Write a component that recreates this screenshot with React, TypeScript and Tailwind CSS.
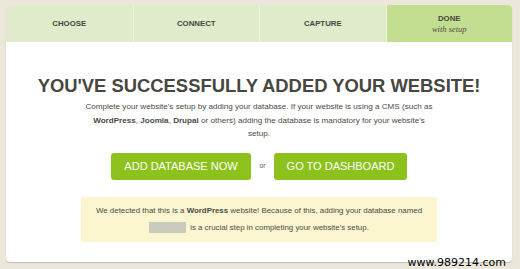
const tabs = ["CHOOSE", "CONNECT", "CAPTURE"];

export default function App() {
  return (
    <div className="relative h-[269px] w-[520px] overflow-hidden bg-[#ebe7da] pl-[6px] pt-[5px] font-['Liberation_Sans',Arial,sans-serif]">
      <div className="h-[257px] w-[506px] overflow-hidden rounded-[4px] bg-white shadow-[0_1px_1px_rgba(0,0,0,0.18)]">
        <div className="grid h-[37px] grid-cols-4 text-[7.8px] font-bold text-[#454540]">
          {tabs.map((t, i) => (
            <div key={t} className={`flex items-center justify-center bg-[#dfebca] ${i > 0 ? "border-l border-[#eef4e2]" : ""}`}>
              {t}
            </div>
          ))}
          <div className="flex flex-col items-center justify-center border-l border-[#eef4e2] bg-[#c4de91] leading-[11px]">
            <span>DONE</span>
            <span className="font-['Liberation_Serif',serif] text-[8.5px] font-normal italic text-[#4b4b45]">with setup</span>
          </div>
        </div>

        <div className="flex flex-col items-center pt-[33px]">
          <h1 className="text-[18.4px] font-bold leading-[22px] text-[#47473f]">YOU'VE SUCCESSFULLY ADDED YOUR WEBSITE!</h1>
          <p className="mt-[3px] w-[352px] text-center text-[8.1px] leading-[13.5px] text-[#4a4a45]">
            Complete your website's setup by adding your database. If your website is using a CMS (such as{" "}
            <b>WordPress</b>, <b>Joomla</b>, <b>Drupal</b> or others) adding the database is mandatory for your website's setup.
          </p>

          <div className="mt-[12px] flex items-center">
            <button className="flex h-[27px] w-[140px] items-center justify-center rounded-[3px] bg-[#8cc21b] text-[11px] text-white">
              ADD DATABASE NOW
            </button>
            <span className="w-[23px] text-center text-[6.5px] text-[#555]">or</span>
            <button className="flex h-[27px] w-[133px] items-center justify-center rounded-[3px] bg-[#8cc21b] text-[11px] text-white">
              GO TO DASHBOARD
            </button>
          </div>

          <div className="mt-[17px] flex h-[45px] w-[356px] flex-col items-center justify-center rounded-[3px] bg-[#fbf6cf] text-[7.9px] leading-[17px] text-[#4a4a45]">
            <p>
              We detected that this is a <b>WordPress</b> website! Because of this, adding your database named
            </p>
            <p className="flex items-center">
              <span className="mr-[4px] inline-block h-[11px] w-[37px] bg-[#cbcbbd]" />
              is a crucial step in completing your website's setup.
            </p>
          </div>
        </div>
      </div>
      <span className="absolute bottom-[-1px] right-[14px] font-['DejaVu_Sans',sans-serif] text-[11px] leading-[14px] text-black">
        www.989214.com
      </span>
    </div>
  );
}
